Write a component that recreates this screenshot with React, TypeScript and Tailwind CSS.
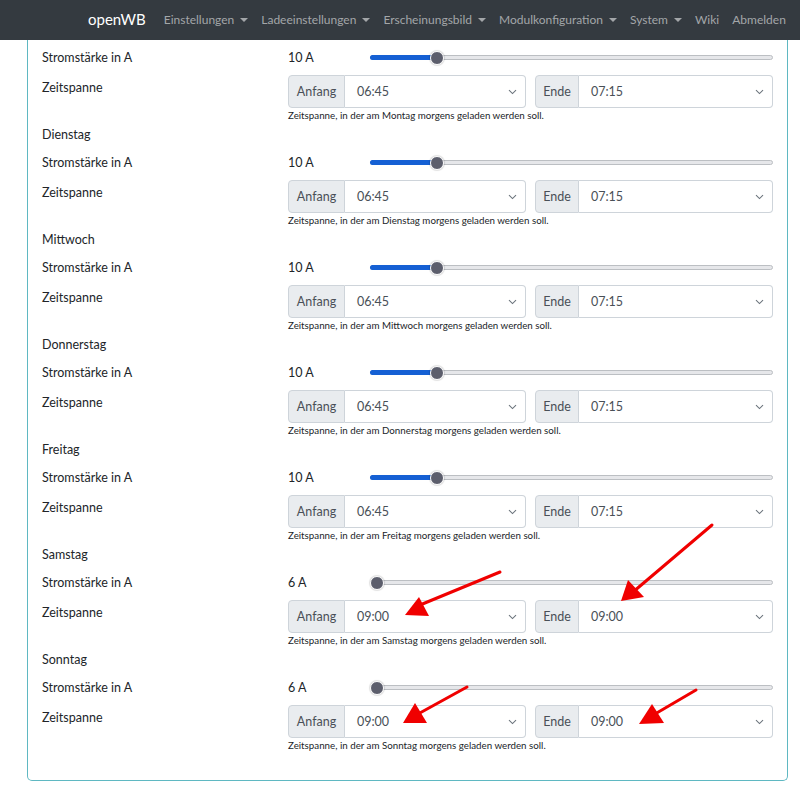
import React from "react";

const days = [
  { name: "Montag", amps: 10, start: "06:45", end: "07:15" },
  { name: "Dienstag", amps: 10, start: "06:45", end: "07:15" },
  { name: "Mittwoch", amps: 10, start: "06:45", end: "07:15" },
  { name: "Donnerstag", amps: 10, start: "06:45", end: "07:15" },
  { name: "Freitag", amps: 10, start: "06:45", end: "07:15" },
  { name: "Samstag", amps: 6, start: "09:00", end: "09:00" },
  { name: "Sonntag", amps: 6, start: "09:00", end: "09:00" },
];

const navItems = [
  { label: "Einstellungen", caret: true },
  { label: "Ladeeinstellungen", caret: true },
  { label: "Erscheinungsbild", caret: true },
  { label: "Modulkonfiguration", caret: true },
  { label: "System", caret: true },
  { label: "Wiki", caret: false },
  { label: "Abmelden", caret: false },
];

function Caret() {
  return (
    <span className="ml-[6px] inline-block h-0 w-0 border-x-[4px] border-t-[4px] border-x-transparent border-t-[#a3a6a9] align-middle" />
  );
}

function Chevron() {
  return (
    <svg width="9" height="6" viewBox="0 0 9 6" className="shrink-0">
      <path d="M1 1.2 L4.5 4.6 L8 1.2" fill="none" stroke="#6c757d" strokeWidth="1.1" />
    </svg>
  );
}

function Slider({ value }: { value: number }) {
  const frac = (value - 6) / (32 - 6);
  const pos = `calc(7px + ${frac} * (100% - 14px))`;
  return (
    <div className="relative h-[14px] flex-1">
      <div className="absolute left-0 right-0 top-[4px] h-[5px] rounded-full border border-[#bcbfc3] bg-[#e6e7ea]" />
      {frac > 0 && (
        <div className="absolute left-0 top-[4px] h-[5px] rounded-full bg-[#1560d4]" style={{ width: pos }} />
      )}
      <div
        className="absolute top-0 h-[14px] w-[14px] -translate-x-1/2 rounded-full border border-white bg-[#5c5e6c] shadow-[0_0_1px_1px_rgba(0,0,0,0.12)]"
        style={{ left: pos }}
      />
    </div>
  );
}

function TimeSelect({ label, value, labelWidth }: { label: string; value: string; labelWidth: string }) {
  return (
    <div className="flex h-[33px] flex-1 text-[12.5px] text-[#495057]">
      <div
        className={`${labelWidth} flex items-center justify-center rounded-l-[4px] border border-[#ced4da] bg-[#e9ecef] pt-px`}
      >
        {label}
      </div>
      <div className="flex flex-1 items-center justify-between rounded-r-[4px] border border-l-0 border-[#ced4da] bg-white pl-[12px] pr-[8px] pt-px">
        <span>{value}</span>
        <Chevron />
      </div>
    </div>
  );
}

function DayBlock({ day, first }: { day: (typeof days)[number]; first: boolean }) {
  return (
    <div className="pb-[3px]">
      {!first && <div className="flex h-[20px] items-center pt-px">{day.name}</div>}
      <div className="grid h-[35px] grid-cols-[246px_1fr] items-center pt-px">
        <div>Stromstärke in A</div>
        <div className="flex items-center">
          <div className="w-[82px]">{day.amps} A</div>
          <Slider value={day.amps} />
        </div>
      </div>
      <div className="grid grid-cols-[246px_1fr]">
        <div className="pt-[3px] leading-[20px]">Zeitspanne</div>
        <div>
          <div className="flex gap-[9px]">
            <TimeSelect label="Anfang" value={day.start} labelWidth="w-[57px]" />
            <TimeSelect label="Ende" value={day.end} labelWidth="w-[44px]" />
          </div>
          <div className="h-[14px] text-[9.75px] leading-[14px] text-[#212529]">
            Zeitspanne, in der am {day.name} morgens geladen werden soll.
          </div>
        </div>
      </div>
    </div>
  );
}

function Arrow({ from, to, head }: { from: [number, number]; to: [number, number]; head: [number, number][] }) {
  return (
    <g>
      <line x1={from[0]} y1={from[1]} x2={to[0]} y2={to[1]} stroke="#f00000" strokeWidth="3" strokeLinecap="round" />
      <polygon points={head.map((p) => p.join(",")).join(" ")} fill="#f00000" />
    </g>
  );
}

export default function App() {
  return (
    <div className="relative h-[787px] w-[800px] overflow-hidden bg-white font-['Lato',sans-serif] text-[12.5px] text-[#212529]">
      {/* Navbar */}
      <nav className="flex h-[40px] items-center bg-[#343a40] pb-px pl-[88px]">
        <span className="mr-[18px] text-[15px] text-white">openWB</span>
        <div className="flex items-center gap-[13px] text-[12px] text-[#a3a6a9]">
          {navItems.map((item) => (
            <span key={item.label} className="flex items-center">
              {item.label}
              {item.caret && <Caret />}
            </span>
          ))}
        </div>
      </nav>

      {/* Card */}
      <div className="mx-[27px] w-[761px] rounded-b-[5px] border-x border-b border-[#5fb8c2] px-[14px] pb-[25px]">
        {days.map((day, i) => (
          <DayBlock key={day.name} day={day} first={i === 0} />
        ))}
      </div>

      {/* Annotation arrows */}
      <svg className="pointer-events-none absolute left-0 top-0" width="800" height="787">
        <Arrow from={[500, 572]} to={[420, 605]} head={[[405, 615], [419, 597], [429, 616]]} />
        <Arrow from={[712, 525]} to={[633, 592]} head={[[621, 601], [628, 580], [644, 597]]} />
        <Arrow from={[467, 687]} to={[418, 714]} head={[[403, 723], [415, 703], [427, 723]]} />
        <Arrow from={[696, 690]} to={[655, 714]} head={[[639, 724], [652, 704], [664, 723]]} />
      </svg>
    </div>
  );
}
